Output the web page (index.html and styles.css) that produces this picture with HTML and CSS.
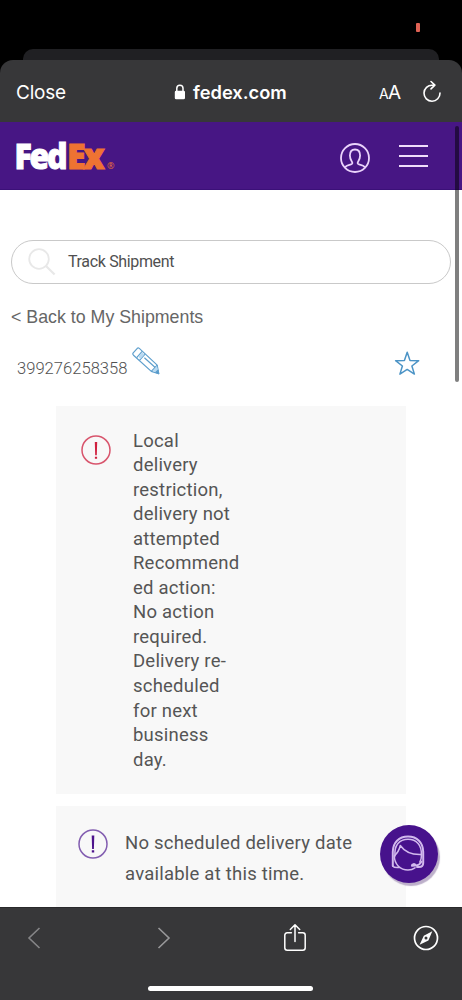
FILE: index.html
```html
<!DOCTYPE html>
<html lang="en">
<head>
<meta charset="utf-8">
<meta name="viewport" content="width=device-width, initial-scale=1">
<title>FedEx Tracking</title>
<link rel="stylesheet" href="styles.css">
</head>
<body>
<div class="screen">
  <div class="status"><i class="rec"></i></div>
  <div class="back-sheet"></div>
  <header class="browser-bar">
    <span class="close">Close</span>
    <div class="address">
      <svg width="12" height="16" viewBox="0 0 12 16"><path d="M2.800 7V4.300a3.100 3.100 0 0 1 6.200 0V7" fill="none" stroke="#fff" stroke-width="1.500"/><rect x=".8" y="6.700" width="10.200" height="8.600" rx="1.400" fill="#fff"/></svg>
      <span>fedex.com</span>
    </div>
    <span class="text-size"><small>A</small>A</span>
    <svg class="reload" width="20" height="24" viewBox="0 0 20 24" fill="none" stroke="#fff" stroke-width="1.600" stroke-linecap="round" stroke-linejoin="round"><path d="M12.500 5.200H10.300A8 8 0 1 0 18 13M9 1.500l3.900 3.700L9 8.900"/></svg>
  </header>
  <main class="page">
    <nav class="site-bar">
      <svg class="logo" width="102" height="44" viewBox="0 -5 102 44"><text class="logo-fed" x="-1.500" y="28.500" textLength="51" lengthAdjust="spacingAndGlyphs">Fed</text><text class="logo-ex" x="51" y="28.500" textLength="35.500" lengthAdjust="spacingAndGlyphs">Ex</text><text class="logo-r" x="91" y="29">®</text></svg>
      <svg class="user" width="32" height="32" viewBox="0 0 32 32" fill="none" stroke="#ead3fb" stroke-width="1.800" stroke-linejoin="round"><circle cx="16" cy="16" r="14"/><path d="M6 25.500c.8-2 3.200-2.400 6-3.100 1.600-.4 1.600-1.500.9-2.700-1.500-2-2-4-2-6.100 0-3.700 2-6.100 5.100-6.100s5.100 2.400 5.100 6.100c0 2.100-.5 4.100-2 6.100-.7 1.200-.7 2.300.9 2.700 2.800.7 5.200 1.100 6 3.100"/></svg>
      <div class="menu"><i></i><i></i><i></i></div>
    </nav>
    <div class="search">
      <svg width="28" height="28" viewBox="0 0 28 28" fill="none" stroke="#e8e8e8"><circle cx="11" cy="11" r="9.800" stroke-width="1.800"/><path d="M18 18l8.600 8.500" stroke-width="2.200"/></svg>
      <span>Track Shipment</span>
    </div>
    <a class="back">&lt; Back to My Shipments</a>
    <div class="shipment">
      <span class="number">399276258358</span>
      <svg class="pencil" width="28" height="28" viewBox="0 0 28 28" fill="none" stroke="#5e9fcd" stroke-width="1.200" stroke-linejoin="round"><path d="M1.200 5.800 5.300 1.300Q6.200.5 7.300 1.400L25.200 18.100 26.700 26.600 19.300 24.400 1.500 8.200Q.3 7 1.200 5.800Z"/><path d="M4.700 10.700 10.200 4.300M7.500 13.300 13 7M12.400 10.700 23.200 20.500M19.300 24.400 25.200 18.100"/><path d="M6.200 9.600 10.100 5.200l2.400 2.200-4.200 4.600Z" fill="#b9daf2" stroke="none"/><path d="m20.500 24 4.500-5 1.700 7.600Z" fill="#b9daf2" stroke="none"/><path d="m23.800 25.500 2.200-2.400.7 3.500Z" fill="#3f8ac4"/></svg>
      <svg class="star" width="26" height="25" viewBox="0 0 26 25" fill="none" stroke="#4c94c6" stroke-width="1.500" stroke-linejoin="round"><path d="m13.200 1.300 2.800 8.200 8.700.2-6.800 5.300 2.500 8.100-7.200-4.700-7.300 4.700L8.400 15 1.600 9.700l8.800-.2Z"/></svg>
    </div>
    <section class="card alert">
      <svg width="32" height="32" viewBox="0 0 32 32"><circle cx="16" cy="16" r="14" fill="none" stroke="#d8546c" stroke-width="1.500"/><path d="M14.800 8h2.400l-.4 13.200h-1.600ZM14.900 22.700h2.200v2h-2.200Z" fill="#d0213f"/></svg>
      <p>Local<br>delivery<br>restriction,<br>delivery not<br>attempted<br>Recommend<br>ed action:<br>No action<br>required.<br>Delivery re-<br>scheduled<br>for next<br>business<br>day.</p>
    </section>
    <section class="card notice">
      <svg width="32" height="32" viewBox="0 0 32 32"><circle cx="16" cy="16" r="14" fill="none" stroke="#825db0" stroke-width="1.500"/><path d="M14.700 7.500h2.600l-.4 13.500h-1.800ZM14.800 22.300h2.400v2.100h-2.400Z" fill="#4d148c"/></svg>
      <p>No scheduled delivery date<br>available at this time.</p>
    </section>
    <div class="scrollbar"></div>
    <div class="chat">
      <svg width="58" height="58" viewBox="0 0 58 58" fill="none" stroke="#d2b9ed" stroke-width="1.500" stroke-linecap="round" stroke-linejoin="round"><path d="M12.800 41V27C12.800 17.500 19 11.500 28 11.500S43.200 17.500 43.200 27V38Q43.200 42 39 42H37" stroke-width="2"/><path d="M15 31C14 20 19.500 14.300 28 14.300S42 20 41.300 30"/><path d="M14.300 31C17.500 28 19.500 24 20.300 20.500 24.500 26.500 31 30 41.500 29.500M14.300 31C14.500 39.500 20.500 45 28 45 31 45 33 44.300 35 42.800M12.800 41Q14 43 19 42.500M41.500 30Q41.500 34 39.800 37"/><path d="M31.800 40.700C31.800 38.600 35 38.600 35.500 40M35.500 40.500C38.500 40.500 40.500 38.500 41.500 36.500M32.200 40.900 35 40.700" stroke-width="1.800"/></svg>
    </div>
  </main>
  <footer class="tool-bar">
    <div class="tools">
      <svg width="14" height="24" viewBox="0 0 14 24" fill="none" stroke="#858587" stroke-width="1.600"><path d="M12.500 2 2 12l10.500 10"/></svg>
      <svg class="forward" width="14" height="24" viewBox="0 0 14 24" fill="none" stroke="#98989a" stroke-width="1.600"><path d="M1.500 2 12 12 1.500 22"/></svg>
      <svg class="share" width="24" height="30" viewBox="0 0 24 30" fill="none" stroke="#fff" stroke-width="1.500" stroke-linecap="round" stroke-linejoin="round"><path d="M8.400 9.800H4.300Q1.800 9.800 1.800 12.300v12.400q0 2.500 2.500 2.500h15.400q2.500 0 2.500-2.500V12.300q0-2.500-2.500-2.500h-4.100M12 18.500V2M7.300 6.500 12 1.800l4.700 4.700"/></svg>
      <svg class="compass" width="26" height="26" viewBox="0 0 26 26"><circle cx="13" cy="13" r="11.500" fill="none" stroke="#fff" stroke-width="1.700"/><path fill-rule="evenodd" d="M19.300 6.300 15.400 15.400 6.600 19.700l4.200-9ZM13 11.500a1.500 1.500 0 1 0 0 3 1.500 1.500 0 0 0 0-3Z" fill="#fff"/></svg>
    </div>
    <div class="home"></div>
  </footer>
</div>
</body>
</html>
```

FILE: styles.css
```css
* { box-sizing: border-box; }
body { margin: 0; background: #000; }
svg { display: block; flex: none; }
p { margin: 0; }
.screen { width: 462px; height: 1000px; display: flex; flex-direction: column; overflow: hidden; background: #000; font-family: Roboto, sans-serif; }
.status { height: 49px; flex: none; display: flex; justify-content: flex-end; padding: 23px 42px 0 0; }
.rec { width: 4px; height: 9px; border-radius: 1px; background: #df6254; }
.back-sheet { height: 11px; flex: none; margin: 0 23px; border-radius: 10px 10px 0 0; background: #202023; }
.browser-bar { height: 62px; flex: none; display: flex; align-items: center; padding: 2px 20px 0 16px; border-radius: 13px 13px 0 0; background: #373739; color: #fff; font-family: Inter, sans-serif; }
.close { width: 158px; font-size: 19px; letter-spacing: -.2px; }
.address { width: 205px; display: flex; align-items: center; gap: 7px; font-size: 18.300px; font-weight: 600; }
.text-size { width: 43px; font-size: 19px; font-weight: 400; white-space: nowrap; letter-spacing: -.6px; }
.text-size small { font-size: 14px; }
.page { position: relative; height: 785px; flex: none; overflow: hidden; background: #fff; color: #525252; }
.site-bar { height: 67.500px; display: flex; align-items: flex-start; padding: 13px 34px 0 16px; background: #471684; border-bottom: 1px solid #3b1078; }
.logo { overflow: visible; }
.logo text { font-family: "Open Sans", sans-serif; font-weight: 800; font-size: 36px; letter-spacing: -2.500px; fill: #fff; stroke: #fff; stroke-width: 1px; }
.logo .logo-ex { fill: #ee7332; stroke: #ee7332; }
.logo .logo-r { font-size: 9px; font-weight: 400; letter-spacing: 0; fill: #ee7332; stroke: none; }
.user { margin: 7px 0 0 221px; }
.menu { width: 29px; display: flex; flex-direction: column; gap: 8px; margin: 10px 0 0 auto; }
.menu i { height: 2px; background: #efdcfb; }
.search { height: 44px; margin: 50px 11px 0; display: flex; align-items: center; gap: 12px; padding-left: 16px; border: 1px solid #c9c9c9; border-radius: 22px; font-size: 16px; letter-spacing: -.35px; color: #505050; }
.back { display: block; margin: 22px 0 0 11px; font-family: "Liberation Sans", sans-serif; font-size: 17.800px; line-height: 22px; color: #666; }
.shipment { height: 78.500px; display: flex; align-items: flex-start; padding: 19px 42px 0 16px; }
.number { width: 116px; padding-left: 1px; margin-top: 11px; font-size: 16.600px; line-height: 22px; font-weight: 300; white-space: nowrap; }
.star { margin: 4px 0 0 auto; }
.card { width: 350px; margin-left: 56px; display: flex; background: #f8f8f8; color: #555; font-size: 18.500px; letter-spacing: .22px; }
.card p { white-space: nowrap; }
.alert { height: 388px; padding: 22.500px 0 0 24px; gap: 21px; line-height: 24.550px; }
.alert svg { margin-top: 5px; }
.notice { height: 102px; margin-top: 12px; padding: 21.500px 0 0 21px; gap: 16px; line-height: 31px; }
.scrollbar { position: absolute; top: 4px; right: 3px; width: 4px; height: 256px; border-radius: 2px; background: rgba(0, 0, 0, .5); }
.chat { position: absolute; left: 380px; top: 703px; width: 58px; height: 58px; border-radius: 50%; background: #47128c; box-shadow: 2px 3px 1px #bdb0ca; }
.tool-bar { height: 93px; flex: none; background: #373739; border-top: 1px solid #29292b; }
.tools { height: 60px; display: flex; align-items: center; padding: 0 23px 0 27px; }
.forward { margin-left: 116px; }
.share { margin-left: 112px; }
.compass { margin-left: auto; }
.home { width: 165px; height: 5px; margin: 18px auto 0 148px; border-radius: 3px; background: #fff; }
```
